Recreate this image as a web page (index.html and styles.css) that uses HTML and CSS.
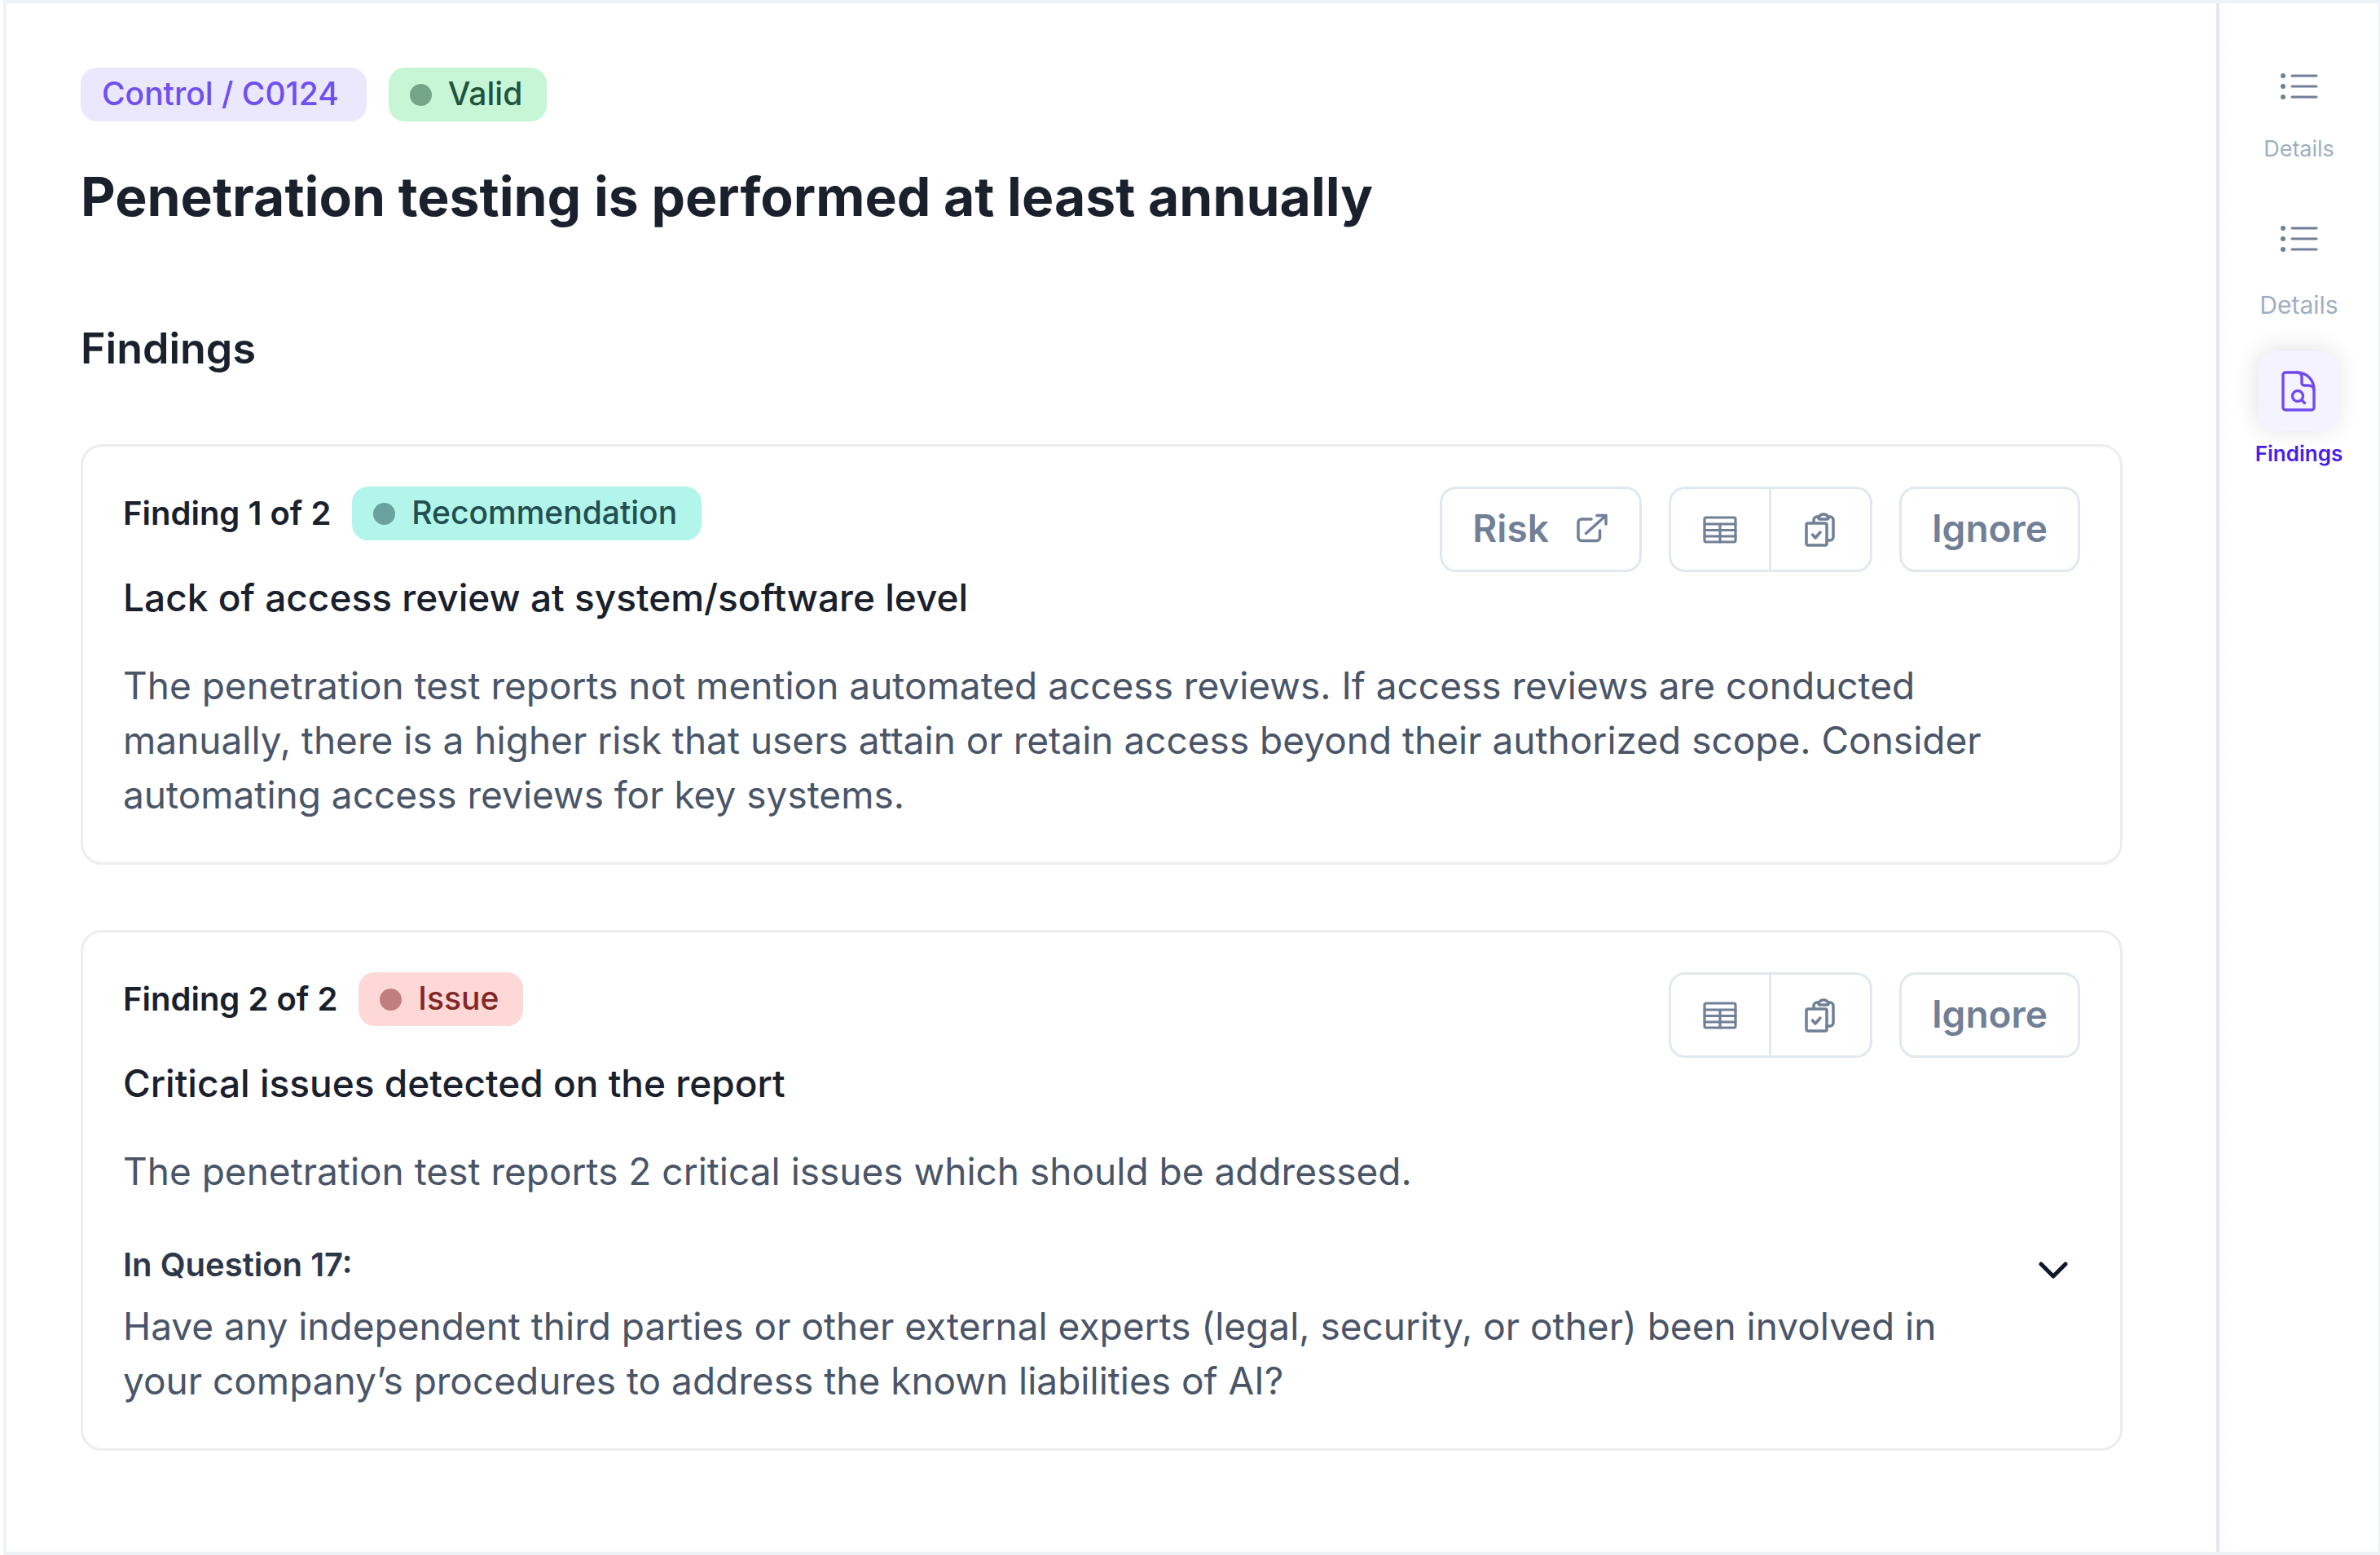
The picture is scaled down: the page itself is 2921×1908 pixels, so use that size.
FILE: index.html
```html
<!DOCTYPE html>
<html lang="en">
<head>
    <meta charset="UTF-8">
    <meta name="viewport" content="width=device-width, initial-scale=1.0">
    <title>Control C0124 - Findings</title>
    <link rel="stylesheet" href="styles.css">
</head>
<body>
    <!-- shared icons -->
    <svg class="hidden" aria-hidden="true">
        <symbol id="icon-external" viewBox="0 0 38 36" stroke-width="3.5">
            <path d="M18 7H6a4 4 0 0 0-4 4V29.500a4 4 0 0 0 4 4H24.500a4 4 0 0 0 4-4V21"/>
            <path d="M11.500 24.500 36 2.500M25 2.500H36V13"/>
        </symbol>
        <symbol id="icon-table" viewBox="0 0 42 34" stroke-width="3.200">
            <rect x="2" y="2" width="38" height="30" rx="2"/>
            <path d="M2 10H40M2 17.500H40M2 25H40M21 10V32"/>
        </symbol>
        <symbol id="icon-clipboard" viewBox="0 0 38 42" stroke-width="3.500">
            <rect x="2" y="13" width="25" height="27" rx="2"/>
            <path d="M11 12V9a4 4 0 0 1 4-4h2M27 34h4a4 4 0 0 0 4-4V9a4 4 0 0 0-4-4h-2"/>
            <path d="M18 8a1.500 1.500 0 0 1-1-2c1-2.500 3-4 6-4s5 1.500 6 4a1.500 1.500 0 0 1-1 2Z"/>
            <path d="M9.500 27l3.500 4 6-7"/>
        </symbol>
        <symbol id="icon-list" viewBox="0 0 46 34">
            <path d="M14 4H44M14 17H44M14 30H44"/>
            <circle class="fill" cx="3" cy="4" r="3"/>
            <circle class="fill" cx="3" cy="17" r="3"/>
            <circle class="fill" cx="3" cy="30" r="3"/>
        </symbol>
    </svg>

    <div class="window">
        <main class="content">
            <div class="tags">
                <span class="tag tag-control">Control / C0124</span>
                <span class="tag tag-valid"><i class="dot"></i>Valid</span>
            </div>
            <h1>Penetration testing is performed at least annually</h1>
            <h2>Findings</h2>

            <section class="card">
                <div class="card-top">
                    <div class="card-title">
                        <div class="finding-row">
                            <span class="finding-no">Finding 1 of 2</span>
                            <span class="tag tag-recommendation"><i class="dot"></i>Recommendation</span>
                        </div>
                        <h3>Lack of access review at system/software level</h3>
                    </div>
                    <div class="actions">
                        <button type="button" class="btn">Risk <svg class="icon icon-external"><use href="#icon-external"/></svg></button>
                        <div class="btn-group">
                            <button type="button" aria-label="Table"><svg class="icon icon-table"><use href="#icon-table"/></svg></button>
                            <button type="button" aria-label="Tasks"><svg class="icon icon-clipboard"><use href="#icon-clipboard"/></svg></button>
                        </div>
                        <button type="button" class="btn">Ignore</button>
                    </div>
                </div>
                <p>The penetration test reports not mention automated access reviews. If access reviews are conducted manually, there is a higher risk that users attain or retain access beyond their authorized scope. Consider automating access reviews for key systems.</p>
            </section>

            <section class="card">
                <div class="card-top">
                    <div class="card-title">
                        <div class="finding-row">
                            <span class="finding-no">Finding 2 of 2</span>
                            <span class="tag tag-issue"><i class="dot"></i>Issue</span>
                        </div>
                        <h3>Critical issues detected on the report</h3>
                    </div>
                    <div class="actions">
                        <div class="btn-group">
                            <button type="button" aria-label="Table"><svg class="icon icon-table"><use href="#icon-table"/></svg></button>
                            <button type="button" aria-label="Tasks"><svg class="icon icon-clipboard"><use href="#icon-clipboard"/></svg></button>
                        </div>
                        <button type="button" class="btn">Ignore</button>
                    </div>
                </div>
                <p>The penetration test reports 2 critical issues which should be addressed.</p>
                <div class="question-head">
                    <h4>In Question 17:</h4>
                    <button type="button" class="toggle" aria-label="Expand">
                        <svg viewBox="0 0 36 22"><path d="M3 3 18 18 33 3"/></svg>
                    </button>
                </div>
                <p class="question">Have any independent third parties or other external experts (legal, security, or other) been involved in your company’s procedures to address the known liabilities of AI?</p>
            </section>
        </main>

        <nav class="sidebar">
            <a href="#" class="nav-item">
                <span class="nav-icon"><svg class="icon icon-list"><use href="#icon-list"/></svg></span>
                <span class="nav-label">Details</span>
            </a>
            <a href="#" class="nav-item nav-large">
                <span class="nav-icon"><svg class="icon icon-list"><use href="#icon-list"/></svg></span>
                <span class="nav-label">Details</span>
            </a>
            <a href="#" class="nav-item active">
                <span class="nav-icon">
                    <svg class="icon icon-file" viewBox="0 0 42 50">
                        <g stroke-width="3.400">
                            <path d="M5 2H19C31 2 40 11 40 23V45a3 3 0 0 1-3 3H5a3 3 0 0 1-3-3V5a3 3 0 0 1 3-3Z"/>
                            <path d="M19 2c4 0 6 3 6 6v7a3 3 0 0 0 3 3h5c4 0 7 2 7 6"/>
                            <circle cx="20" cy="31" r="6.500"/>
                            <path d="M25 36l3.500 3.500"/>
                        </g>
                    </svg>
                </span>
                <span class="nav-label">Findings</span>
            </a>
        </nav>
    </div>
</body>
</html>
```

FILE: styles.css
```css
* {
    box-sizing: border-box;
}
body {
    margin: 0;
    font-family: Inter, "Liberation Sans", sans-serif;
    background: #fff;
    color: #1a202c;
}
h1, h2, h3, h4, p {
    margin: 0;
}
button {
    font-family: inherit;
    cursor: pointer;
}
.hidden {
    position: absolute;
    width: 0;
    height: 0;
}
.window {
    display: flex;
    min-height: 100vh;
    margin-left: 4px;
    border: 4px solid #edf2f7;
    border-right-width: 2px;
}
.content {
    flex: 1;
    padding: 79px 115px 0 91px;
}

/* tags */
.tags {
    display: flex;
    gap: 27px;
}
.tag {
    display: inline-flex;
    align-items: center;
    height: 66px;
    padding: 0 30px 4px 26px;
    border-radius: 20px;
    font-size: 39px;
    font-weight: 500;
}
.dot {
    width: 27px;
    height: 27px;
    margin: 4px 20px 0 0;
    border-radius: 50%;
    background: currentColor;
    opacity: 0.5;
}
.tag-control {
    padding-right: 34px;
    background: #ebe7fc;
    color: #6f4ff2;
}
.tag-valid {
    background: #c6f6d5;
    color: #22543d;
}
.tag-recommendation {
    background: #b2f5ea;
    color: #234e52;
}
.tag-issue {
    background: #fed7d7;
    color: #822727;
}

h1 {
    margin-top: 52px;
    font-size: 66px;
    line-height: 80px;
    font-weight: 700;
}
h2 {
    margin-top: 110px;
    font-size: 52px;
    line-height: 74px;
    font-weight: 600;
}

/* finding cards */
.card {
    margin-top: 80px;
    padding: 49px;
    border: 3px solid #ededed;
    border-radius: 26px;
}
.card-top {
    display: flex;
    justify-content: space-between;
    align-items: flex-start;
}
.finding-row {
    display: flex;
    align-items: center;
    gap: 26px;
}
.finding-no, h4 {
    font-size: 40px;
    line-height: 48px;
    font-weight: 600;
}
h3 {
    margin-top: 40px;
    font-size: 46px;
    line-height: 60px;
    font-weight: 500;
}
.card p {
    margin-top: 45px;
    max-width: 2300px;
    font-size: 46px;
    line-height: 67px;
    color: #4a5568;
}
.actions {
    display: flex;
    gap: 33px;
}
.btn {
    display: flex;
    align-items: center;
    gap: 34px;
    height: 105px;
    padding: 0 37px 4px;
    border: 3px solid #e2e8f0;
    border-radius: 20px;
    background: #fff;
    color: #718096;
    font-size: 46px;
    font-weight: 600;
}
.btn-group {
    display: flex;
    height: 105px;
    border: 3px solid #e2e8f0;
    border-radius: 20px;
}
.btn-group button {
    display: flex;
    align-items: center;
    justify-content: center;
    width: 120px;
    padding: 0;
    border: 0;
    background: none;
    color: #718096;
}
.btn-group button + button {
    width: 124px;
    border-left: 3px solid #e2e8f0;
}
.question-head {
    display: flex;
    justify-content: space-between;
    align-items: center;
    margin-top: 57px;
    padding-right: 15px;
}
h4 {
    color: #2d3748;
}
.toggle {
    display: flex;
    padding: 14px 0 0;
    border: 0;
    background: none;
}
.toggle svg {
    width: 36px;
    height: 22px;
    fill: none;
    stroke: #0f172a;
    stroke-width: 5;
    stroke-linecap: round;
    stroke-linejoin: round;
}
.card .question {
    margin-top: 18px;
}

/* icons */
.icon {
    fill: none;
    stroke: currentColor;
    stroke-width: 3;
    stroke-linecap: round;
    stroke-linejoin: round;
}
.fill {
    fill: currentColor;
    stroke: none;
}
.icon-external {
    width: 38px;
    height: 36px;
    margin-right: 2px;
}
.icon-table {
    width: 42px;
    height: 34px;
}
.icon-clipboard {
    width: 38px;
    height: 42px;
}
.icon-list {
    width: 46px;
    height: 34px;
}
.icon-file {
    width: 42px;
    height: 50px;
}

/* sidebar */
.sidebar {
    display: flex;
    flex-direction: column;
    align-items: center;
    gap: 44px;
    width: 199px;
    padding-top: 53px;
    border-left: 4px solid #e2e8f0;
    background: linear-gradient(to right, #fcfcfc, #fff 20px);
}
.nav-item {
    display: flex;
    flex-direction: column;
    align-items: center;
    gap: 12px;
    height: 143px;
    text-decoration: none;
    color: #a0aec0;
    font-size: 27px;
    line-height: 32px;
}
.nav-icon {
    display: flex;
    flex-shrink: 0;
    align-items: center;
    justify-content: center;
    width: 98px;
    height: 98px;
    border-radius: 20px;
    color: #718096;
}
.nav-large {
    font-size: 30px;
    line-height: 40px;
}
.active {
    color: #4a1fea;
    font-size: 26px;
    font-weight: 600;
}
.active .nav-icon {
    background: #f5f3ff;
    color: #704cf0;
    box-shadow: -2px -2px 30px rgba(0, 0, 0, 0.12);
}
```
